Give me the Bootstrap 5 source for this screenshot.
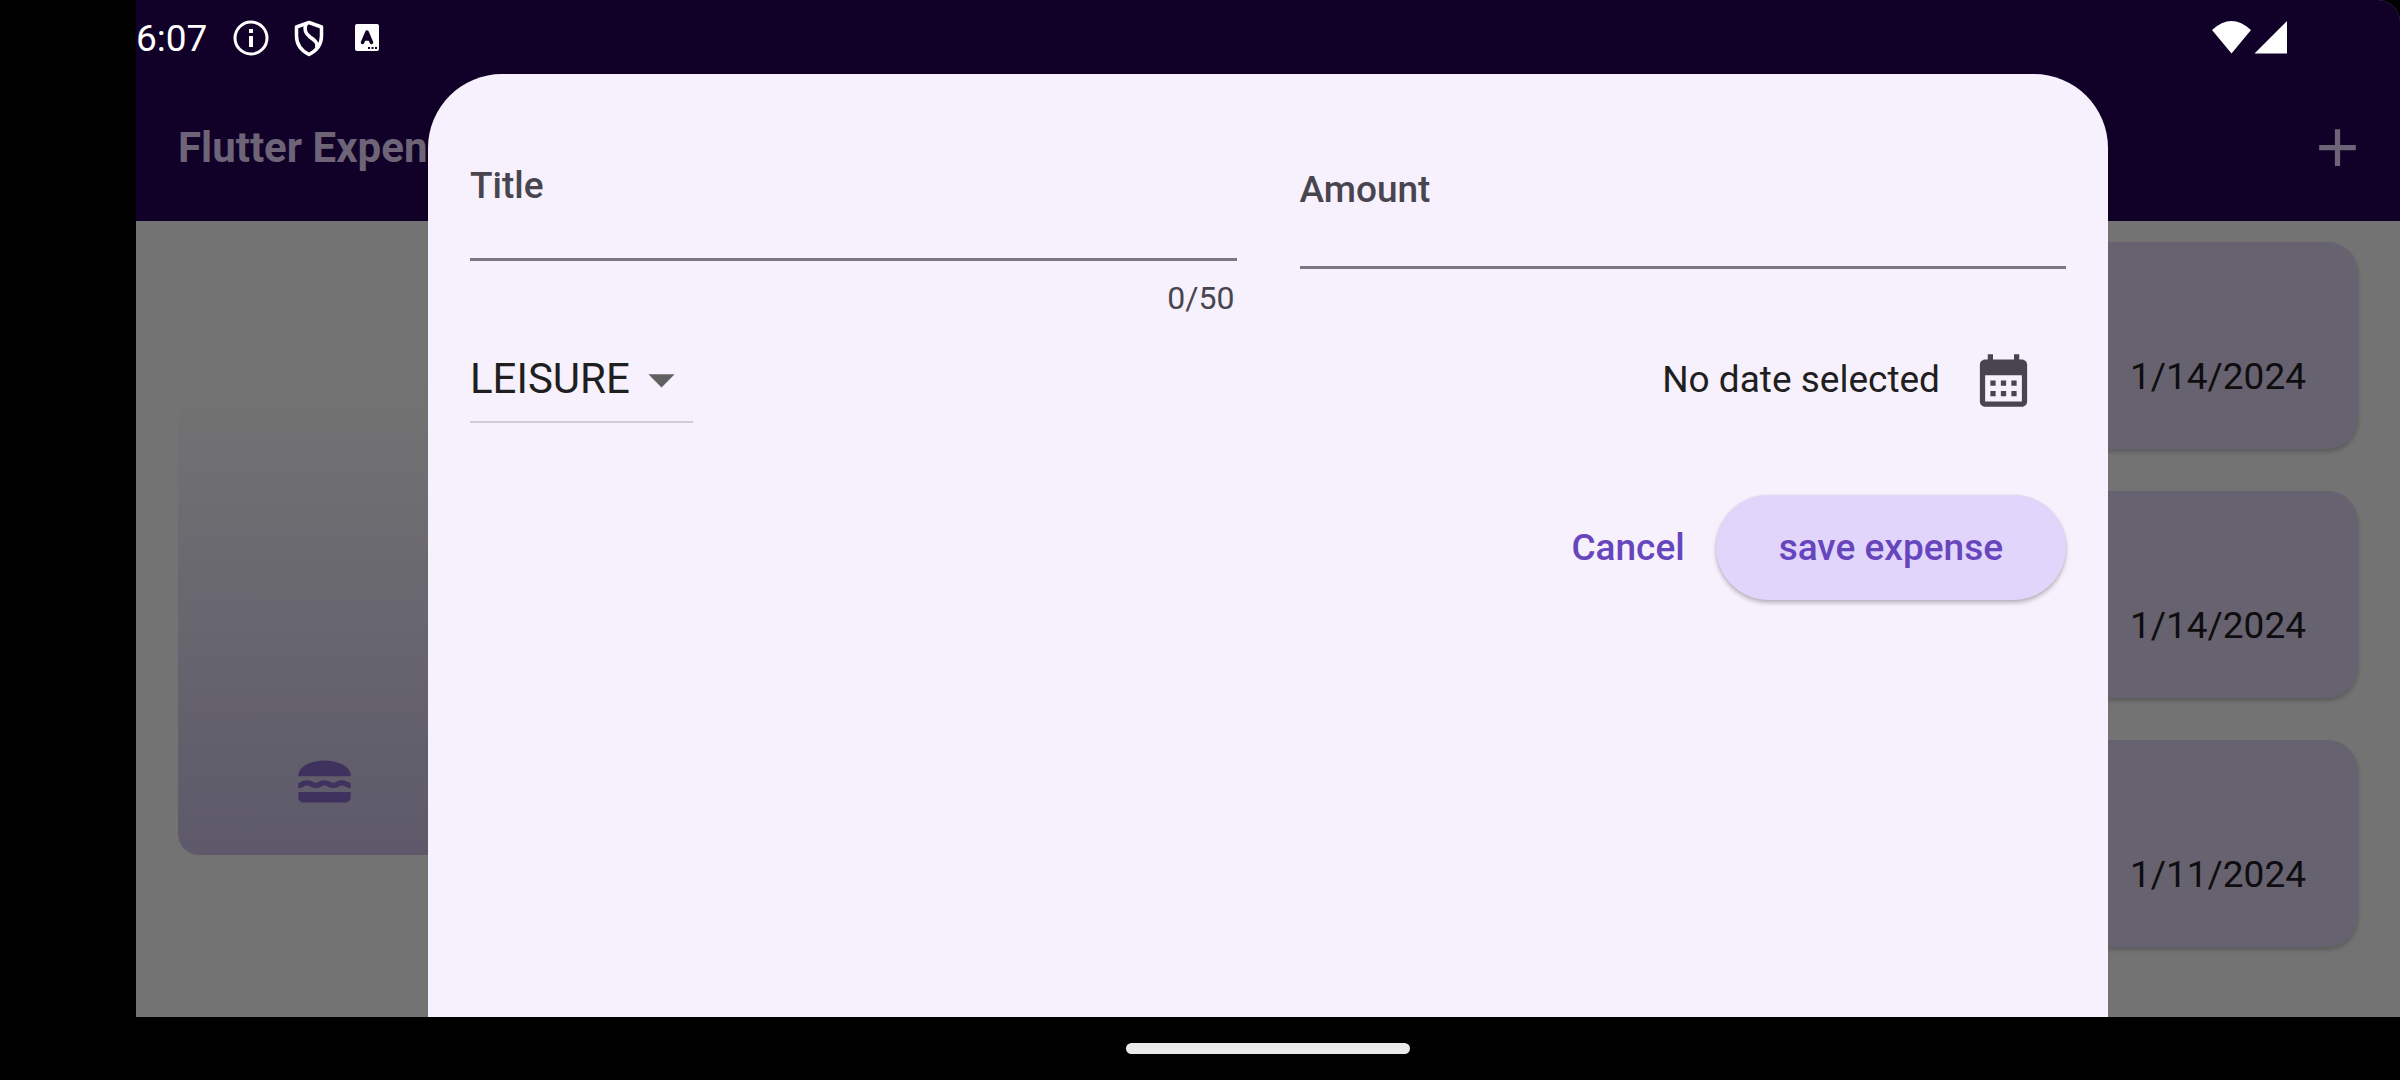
<!DOCTYPE html>
<html lang="en">
<head>
<meta charset="utf-8">
<meta name="viewport" content="width=device-width, initial-scale=1">
<title>Flutter Expenses</title>
<link href="https://cdn.jsdelivr.net/npm/bootstrap@5.3.0/dist/css/bootstrap.min.css" rel="stylesheet">
<style>
  :root {
    --bar: #110028;
    --bar-ink: #6d6477;
    --scrimmed: #737373;
    --tile: #66626f;
    --sheet: #f6f1fc;
    --ink: #1f1e21;
    --ink-soft: #49454f;
    --accent: #6746bd;
  }
  body { font-family: Roboto, "Liberation Sans", sans-serif; font-size: 37px; line-height: 42px; background: #000; color: var(--ink); }
  svg { display: block; flex: none; fill: currentColor; }
  .device { padding-left: 136px; }
  .screen { background: var(--scrimmed); border-top-right-radius: 22px; }
  .status { height: 74px; background: var(--bar); color: #fff; padding: 4px 112px 0 0; }
  .status-icons { gap: 20px; margin-left: 25px; }
  .appbar { height: 147px; background: var(--bar); color: var(--bar-ink); padding: 0 31px 0 42px; }
  .appbar h1 { font-size: 42px; line-height: 50px; font-weight: 700; }
  .tap { width: 126px; height: 126px; color: inherit; }
  .appbar .tap { width: 63px; }
  .chart-pane { padding: 0 42px; }
  .chart { height: 472px; padding: 0 21px 42px; border-radius: 21px; background: linear-gradient(to top, #5d596a, var(--scrimmed)); color: #40325e; }
  .expenses { padding: 21px 42px 42px; gap: 42px; }
  .expense { height: 207px; padding: 51px 52px; border: 0; border-radius: 31px; background: var(--tile); color: #0e0d10; box-shadow: 0 3px 4px rgba(0,0,0,.2); }
  .sheet { top: 74px; max-width: 1680px; padding: 84px 42px 42px; background: var(--sheet); border-radius: 74px 74px 0 0; }
  .fields { gap: 63px; }
  .field { flex: 1 1 0; }
  .field label { line-height: 56px; font-weight: 500; color: var(--ink-soft); }
  .line-input { height: 47px; padding: 0; border: 0; border-bottom: 3px solid #7c7683; border-radius: 0; background: transparent; font-size: 37px; }
  .amount-field { padding-bottom: 45px; }
  .amount-field .line-input { height: 51px; }
  .counter { margin-top: 18px; padding-right: 2px; font-size: 32px; line-height: 38px; color: var(--ink-soft); }
  .picker { width: 223px; border-bottom: 2px solid #d2cdd5; }
  .picker select { height: 84px; padding: 0; border: 0; background: transparent; appearance: none; font-size: 42px; color: var(--ink); }
  .picker svg { right: 0; pointer-events: none; color: #606060; }
  .date { color: var(--ink-soft); }
  .date output { color: var(--ink); }
  .actions { margin-top: 52px; }
  .actions .btn { height: 105px; font-size: 37px; font-weight: 500; line-height: 42px; color: var(--accent); border: 0; }
  .btn-cancel { padding: 0 31px; }
  .actions .btn-save { padding: 0 63px; background: #e1d5fb; box-shadow: 0 3px 4px rgba(0,0,0,.24), 0 0 2px rgba(0,0,0,.1); }
  .home-bar { height: 63px; }
  .home-bar span { width: 284px; height: 11px; background: #eaeaea; }
</style>
</head>
<body>
<div class="device min-vh-100 d-flex flex-column">
  <div class="screen position-relative flex-grow-1 d-flex flex-column overflow-hidden">
    <div class="status d-flex align-items-center">
      <span>6:07</span>
      <div class="status-icons d-flex align-items-center">
        <svg width="38" height="38" viewBox="0 0 38 38" aria-hidden="true"><circle cx="19" cy="18" r="16" fill="none" stroke="currentColor" stroke-width="3"/><path d="M17 9h4v4h-4zM17 16h4v11h-4z"/></svg>
        <svg width="38" height="38" viewBox="0 0 38 38" aria-hidden="true"><g fill="none" stroke="currentColor" stroke-width="3.500" stroke-linejoin="round"><path d="M19 2.500L31.500 7V16C31.500 24.500 26 31 19 34.500C12 31 6.500 24.500 6.500 16V7Z"/><path d="M16 4C13.500 10.500 16 14 20 17C25 20.500 28.500 23 26.500 28"/></g></svg>
        <svg width="38" height="38" viewBox="0 0 38 38" aria-hidden="true"><path d="M9 4h20a2 2 0 0 1 2 2v23a2 2 0 0 1-2 2H9a2 2 0 0 1-2-2V6a2 2 0 0 1 2-2z"/><path d="M14.500 22.500L19 12L23.500 22.500M16 19h6" fill="none" stroke="#110028" stroke-width="3.500" stroke-linecap="round" stroke-linejoin="round"/><path fill="#110028" d="M20 27h2v2h-2zM23.500 27h2v2h-2zM27 27h2v2h-2z"/></svg>
      </div>
      <svg class="ms-auto" width="78" height="36" viewBox="0 0 78 36" aria-hidden="true"><path d="M2 9Q21.500 -9 41 9L21.500 32.500ZM44.500 32.500L77 0V32.500Z"/></svg>
    </div>
    <header class="appbar d-flex align-items-center justify-content-between">
      <h1 class="m-0">Flutter Expen</h1>
      <button class="tap btn border-0 p-0 d-flex align-items-center justify-content-center" type="button" aria-label="Add expense"><svg width="63" height="63" viewBox="0 0 24 24"><path d="M19 13h-6v6h-2v-6H5v-2h6V5h2v6h6v2z"/></svg></button>
    </header>
    <main class="row g-0 flex-grow-1">
      <section class="chart-pane col-6 d-flex align-items-center">
        <div class="chart row g-0 w-100 align-items-end">
          <div class="col-3 d-flex justify-content-center">
            <svg width="63" height="63" viewBox="0 0 24 24" aria-hidden="true"><path d="M22 10c.32-3.280-4.280-6-9.990-6C6.300 4 1.700 6.720 2.020 10H22z"/><path d="M5.350 13.500c.55 0 .78.14 1.150.36.45.27 1.070.64 2.180.64s1.730-.37 2.180-.64c.37-.23.59-.36 1.150-.36.55 0 .78.14 1.150.36.45.27 1.070.64 2.180.64s1.730-.37 2.180-.64c.37-.23.59-.36 1.150-.36s.78.14 1.150.36c.45.27 1.070.63 2.170.64v-1.980s-.79-.16-1.160-.38c-.45-.27-1.070-.64-2.180-.64s-1.730.37-2.180.64c-.37.23-.6.36-1.150.36s-.78-.14-1.150-.36c-.45-.27-1.070-.64-2.180-.64s-1.730.37-2.180.64c-.37.23-.59.36-1.150.36s-.78-.14-1.150-.36c-.45-.27-1.070-.64-2.180-.64s-1.730.37-2.180.64c-.37.23-.59.36-1.150.36v2c1.110 0 1.730-.37 2.210-.64.37-.23.59-.36 1.140-.36z"/><path d="M2 16v2c0 1.100.9 2 2 2h16c1.100 0 2-.9 2-2v-2H2z"/></svg>
          </div>
        </div>
      </section>
      <section class="expenses col-6 d-flex flex-column">
        <article class="expense card flex-row align-items-end justify-content-end"><time datetime="2024-01-14">1/14/2024</time></article>
        <article class="expense card flex-row align-items-end justify-content-end"><time datetime="2024-01-14">1/14/2024</time></article>
        <article class="expense card flex-row align-items-end justify-content-end"><time datetime="2024-01-11">1/11/2024</time></article>
      </section>
    </main>

    <form class="sheet position-absolute start-0 end-0 bottom-0 mx-auto" onsubmit="return false">
      <div class="fields d-flex align-items-center">
        <div class="field">
          <label class="d-block" for="title">Title</label>
          <input class="line-input form-control" id="title" type="text" maxlength="50">
          <div class="counter text-end">0/50</div>
        </div>
        <div class="field amount-field">
          <label class="d-block" for="amount">Amount</label>
          <input class="line-input form-control" id="amount" type="text" inputmode="decimal">
        </div>
      </div>
      <div class="d-flex align-items-center justify-content-between">
        <div class="picker position-relative d-flex align-items-center">
          <select class="w-100" aria-label="Category"><option>LEISURE</option></select>
          <svg class="position-absolute" width="63" height="63" viewBox="0 0 24 24" aria-hidden="true"><path d="M7 10l5 5 5-5z"/></svg>
        </div>
        <div class="date d-flex align-items-center">
          <output>No date selected</output>
          <button class="tap btn border-0 p-0 d-flex align-items-center justify-content-center" type="button" aria-label="Pick a date"><svg width="63" height="63" viewBox="0 0 24 24"><path fill-rule="evenodd" d="M19 4h-1V2h-2v2H8V2H6v2H5c-1.110 0-2 .9-2 2v14c0 1.100.89 2 2 2h14c1.100 0 2-.9 2-2V6c0-1.100-.9-2-2-2zm0 16H5V10h14zM7 12h2v2H7zm4 0h2v2h-2zm4 0h2v2h-2zM7 16h2v2H7zm4 0h2v2h-2zm4 0h2v2h-2z"/></svg></button>
        </div>
      </div>
      <div class="actions d-flex align-items-center justify-content-end">
        <button class="btn btn-cancel" type="button">Cancel</button>
        <button class="btn btn-save rounded-pill" type="submit">save expense</button>
      </div>
    </form>
  </div>
  <div class="home-bar d-flex align-items-center justify-content-center"><span class="rounded-pill"></span></div>
</div>
<script src="https://cdn.jsdelivr.net/npm/bootstrap@5.3.0/dist/js/bootstrap.bundle.min.js"></script>
</body>
</html>
